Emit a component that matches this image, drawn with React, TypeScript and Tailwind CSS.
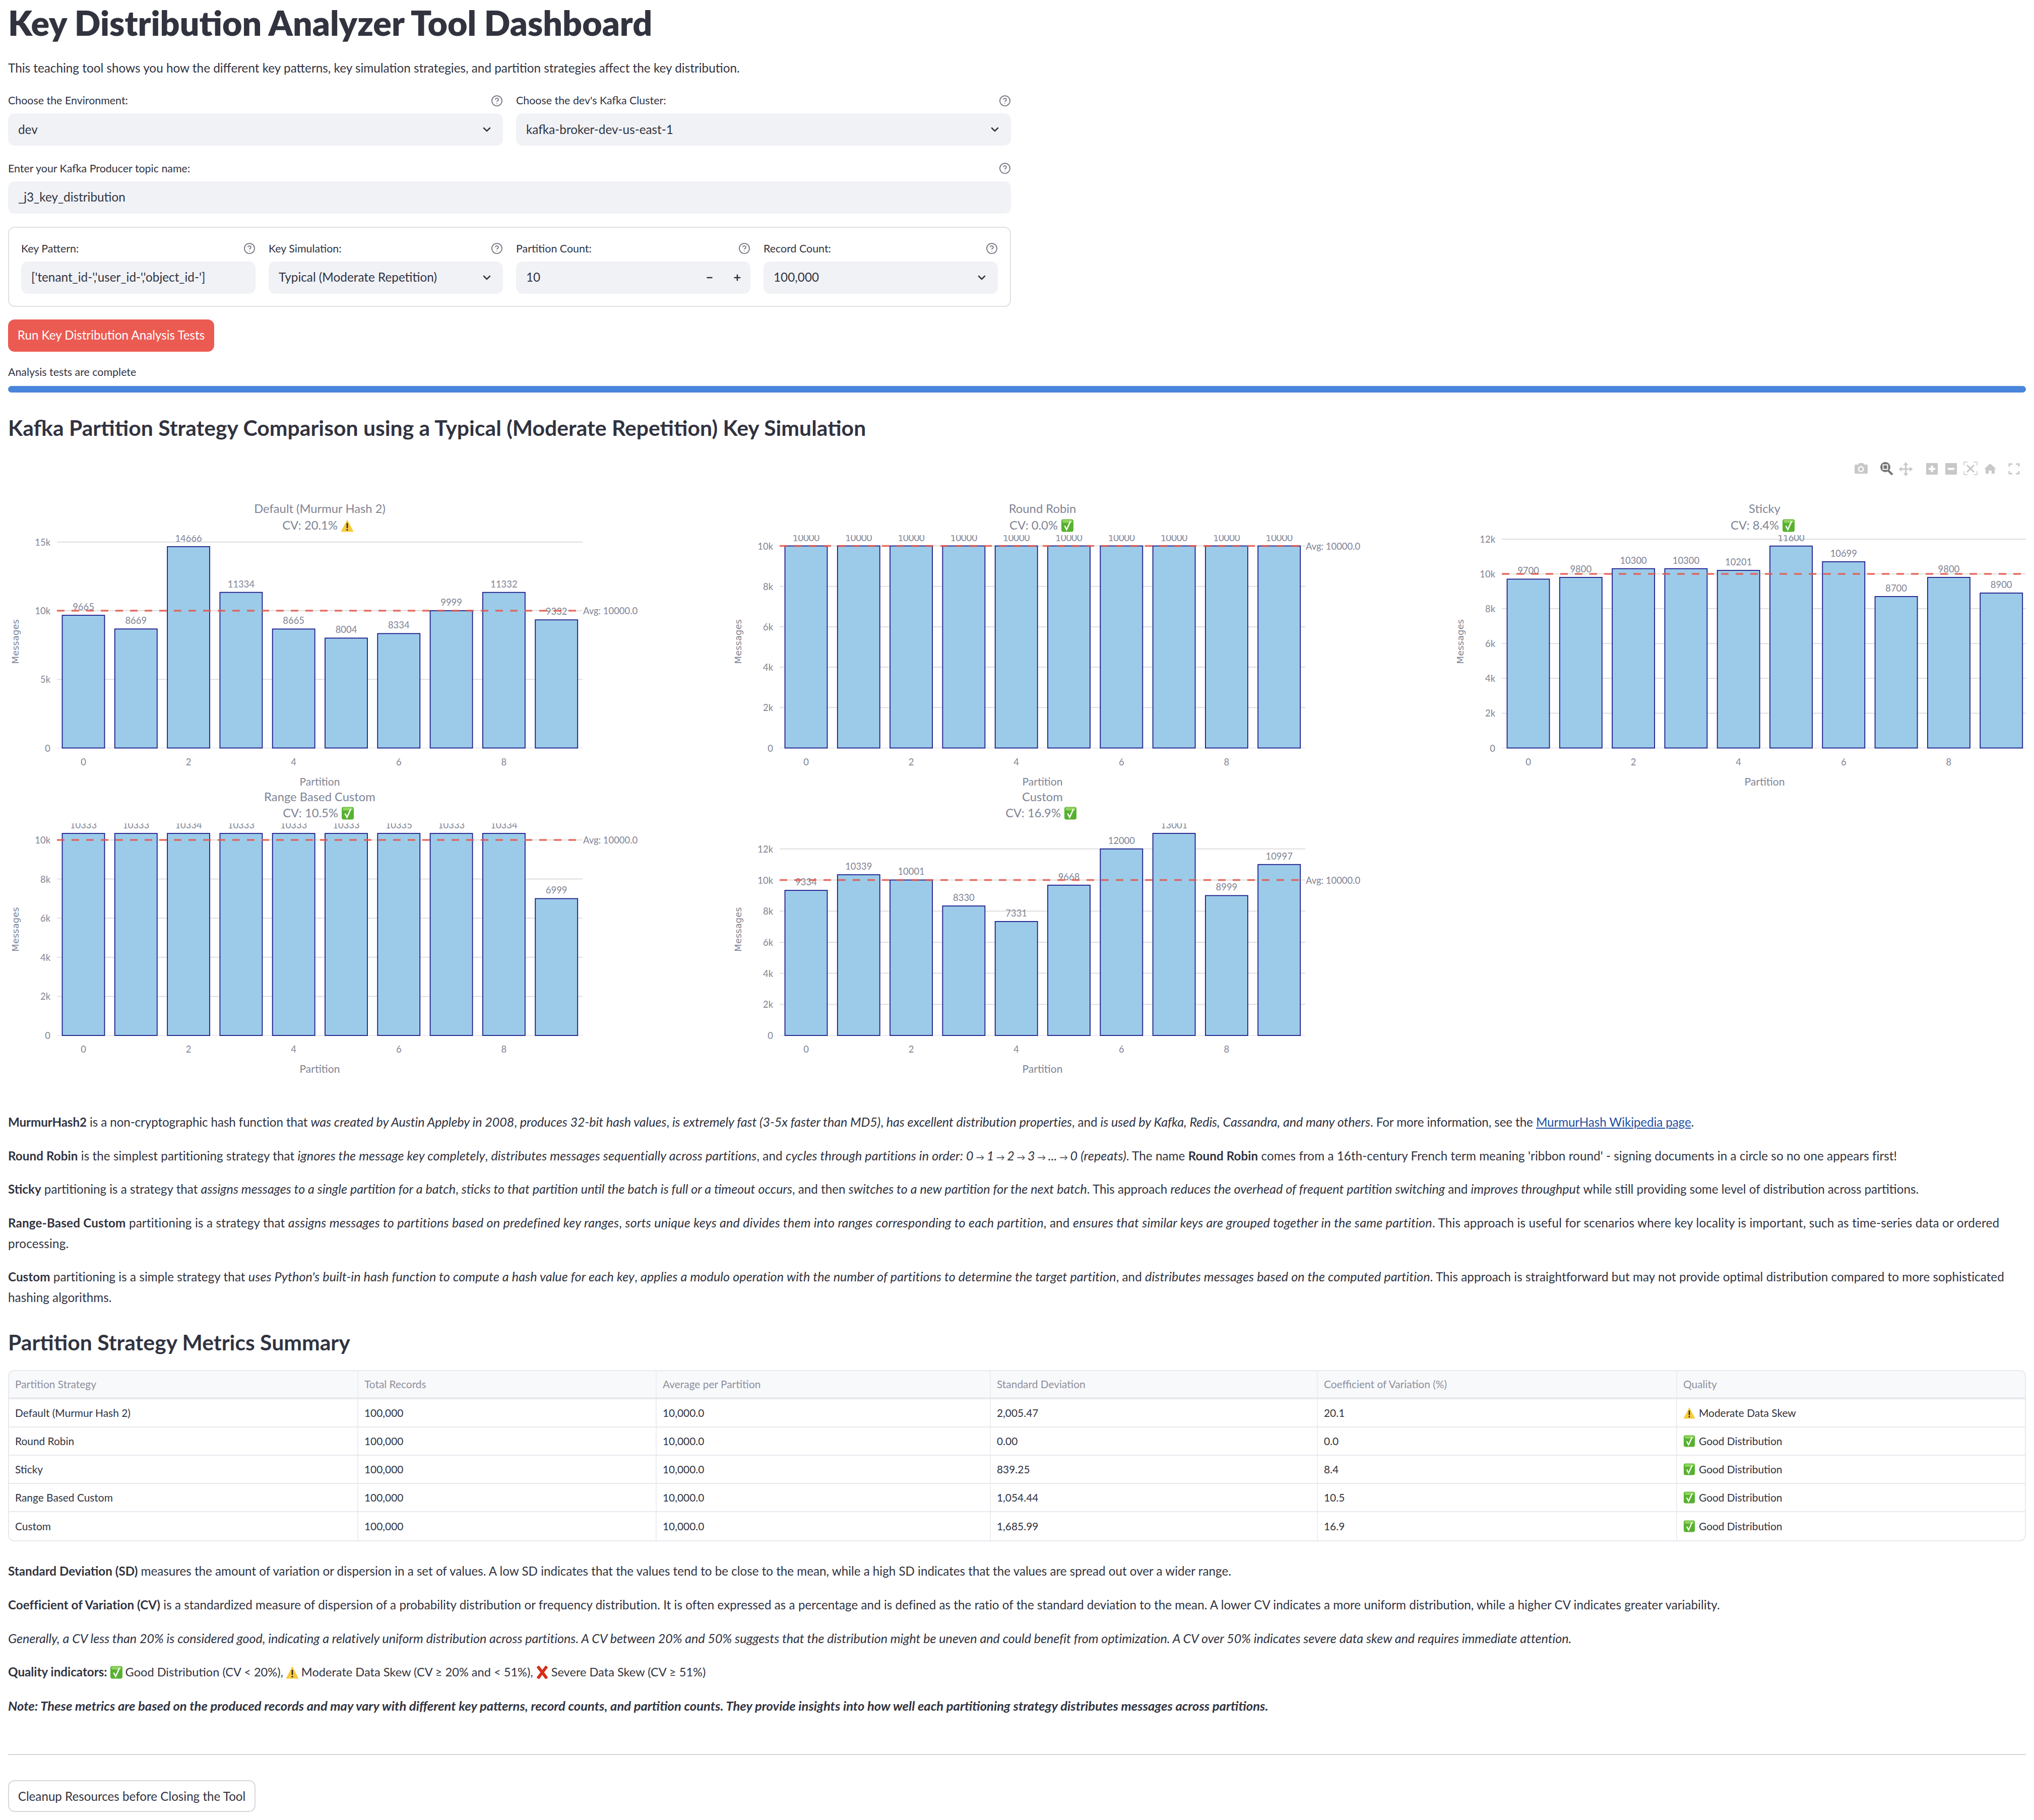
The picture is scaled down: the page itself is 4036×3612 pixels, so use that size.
import { ChevronDown, CircleHelp, Minus, Plus } from 'lucide-react';
import type { ReactNode } from 'react';

const TEXT = '#808495';

type Emoji = 'check' | 'warn';

type Chart = {
  title: string;
  cv: string;
  cvEnd: number;
  emoji: Emoji;
  left: number;
  zero: number;
  per10k: number;
  clipTop: number;
  ticks: [number, string][];
  values: number[];
};

const ROW_1 = { zero: 1483.5, clipTop: 1061 };
const ROW_2 = { zero: 2054, clipTop: 1633 };
const thousands: [number, string][] = [
  [0, '0'],
  [2000, '2k'],
  [4000, '4k'],
  [6000, '6k'],
  [8000, '8k'],
  [10000, '10k'],
];

const charts: Chart[] = [
  {
    title: 'Default (Murmur Hash 2)',
    cv: 'CV: 20.1%',
    cvEnd: 670,
    emoji: 'warn',
    left: 113,
    per10k: 272.5,
    ...ROW_1,
    ticks: [
      [0, '0'],
      [5000, '5k'],
      [10000, '10k'],
      [15000, '15k'],
    ],
    values: [9665, 8669, 14666, 11334, 8665, 8004, 8334, 9999, 11332, 9332],
  },
  {
    title: 'Round Robin',
    cv: 'CV: 0.0%',
    cvEnd: 2099,
    emoji: 'check',
    left: 1547,
    per10k: 401,
    ...ROW_1,
    ticks: thousands,
    values: [10000, 10000, 10000, 10000, 10000, 10000, 10000, 10000, 10000, 10000],
  },
  {
    title: 'Sticky',
    cv: 'CV: 8.4%',
    cvEnd: 3530,
    emoji: 'check',
    left: 2980,
    per10k: 345.5,
    ...ROW_1,
    ticks: [...thousands, [12000, '12k']],
    values: [9700, 9800, 10300, 10300, 10201, 11600, 10699, 8700, 9800, 8900],
  },
  {
    title: 'Range Based Custom',
    cv: 'CV: 10.5%',
    cvEnd: 671,
    emoji: 'check',
    left: 113,
    per10k: 388,
    ...ROW_2,
    ticks: thousands,
    values: [10333, 10333, 10334, 10333, 10333, 10333, 10335, 10333, 10334, 6999],
  },
  {
    title: 'Custom',
    cv: 'CV: 16.9%',
    cvEnd: 2105,
    emoji: 'check',
    left: 1547,
    per10k: 308.5,
    ...ROW_2,
    ticks: [...thousands, [12000, '12k']],
    values: [9334, 10339, 10001, 8330, 7331, 9668, 12000, 13001, 8999, 10997],
  },
];

const tableRows = [
  ['Default (Murmur Hash 2)', '100,000', '10,000.0', '2,005.47', '20.1', 'warn', 'Moderate Data Skew'],
  ['Round Robin', '100,000', '10,000.0', '0.00', '0.0', 'check', 'Good Distribution'],
  ['Sticky', '100,000', '10,000.0', '839.25', '8.4', 'check', 'Good Distribution'],
  ['Range Based Custom', '100,000', '10,000.0', '1,054.44', '10.5', 'check', 'Good Distribution'],
  ['Custom', '100,000', '10,000.0', '1,685.99', '16.9', 'check', 'Good Distribution'],
];

function CheckShape() {
  return (
    <>
      <rect x="1" y="0.5" width="24" height="25" rx="4" fill="#58b130" />
      <rect x="3" y="1.5" width="20" height="6" rx="3" fill="#8fd45e" />
      <path d="M7.5 13.5 L11.5 21 L19 4.5" fill="none" stroke="#fff" strokeWidth="2.6" />
    </>
  );
}

function WarnShape() {
  return (
    <>
      <path d="M13 1 L25 24 Q25.5 25.5 24 25.5 H2 Q0.5 25.5 1 24 Z" fill="#f7cb3f" />
      <path d="M13 8 V18" stroke="#222" strokeWidth="2.6" />
      <circle cx="13" cy="21.5" r="1.6" fill="#222" />
    </>
  );
}

function CrossShape() {
  return <path d="M4 1 L22 25 M22 1 L4 25" fill="none" stroke="#d42f1c" strokeWidth="6" />;
}

function InlineEmoji({ kind, className }: { kind: Emoji | 'cross'; className: string }) {
  return (
    <svg viewBox="0 0 26 26" className={`inline-block ${className}`}>
      {kind === 'check' && <CheckShape />}
      {kind === 'warn' && <WarnShape />}
      {kind === 'cross' && <CrossShape />}
    </svg>
  );
}

function ChartPlot({ chart }: { chart: Chart }) {
  const { left, zero, per10k, clipTop } = chart;
  const right = left + 1043;
  const y = (v: number) => zero - (v / 10000) * per10k;
  const cx = (i: number) => left + 52.5 + i * 104.3;
  const mid = left + 521.5;
  const titleY = clipTop === 1061 ? 1009 : 1581;
  const cvY = clipTop === 1061 ? 1042 : 1613;
  const clipId = `clip-${left}-${clipTop}`;
  return (
    <g fontSize="18.4" fill={TEXT}>
      <clipPath id={clipId}>
        <rect x={left} y={clipTop} width="1043" height={zero - clipTop + 4} />
      </clipPath>
      <text x={mid} y={titleY + 8} textAnchor="middle" fontSize="23.8">
        {chart.title}
      </text>
      <text x={chart.cvEnd} y={cvY + 8} textAnchor="end" fontSize="23.8">
        {chart.cv}
      </text>
      <svg x={chart.cvEnd + 6} y={cvY - 13} width="26" height="26" viewBox="0 0 26 26">
        {chart.emoji === 'warn' ? <WarnShape /> : <CheckShape />}
      </svg>
      {chart.ticks.map(([v, label]) => (
        <g key={label}>
          <line x1={left} x2={right} y1={y(v)} y2={y(v)} stroke={v === 0 ? '#ebedf3' : '#dedede'} strokeWidth="2" />
          <text x={left - 13} y={y(v) + 7} textAnchor="end">
            {label}
          </text>
        </g>
      ))}
      {chart.values.map((v, i) => (
        <rect
          key={i}
          x={cx(i) - 42}
          y={y(v)}
          width="84"
          height={zero - y(v)}
          fill="#9ccbe9"
          stroke="#1a1a8a"
          strokeWidth="1.8"
        />
      ))}
      <g clipPath={`url(#${clipId})`}>
        {chart.values.map((v, i) => (
          <text key={i} x={cx(i)} y={y(v) - 10} textAnchor="middle">
            {v}
          </text>
        ))}
      </g>
      <line
        x1={left}
        x2={right}
        y1={y(10000)}
        y2={y(10000)}
        stroke="#e6574a"
        strokeOpacity="0.85"
        strokeWidth="3.6"
        strokeDasharray="15 14"
      />
      {/* the third plot's label runs off the page in the original, so it isn't drawn */}
      {right + 100 < 4020 && (
        <text x={right + 1} y={y(10000) + 7}>
          Avg: 10000.0
        </text>
      )}
      {[0, 2, 4, 6, 8].map((i) => (
        <text key={i} x={cx(i)} y={zero + 34} textAnchor="middle">
          {i}
        </text>
      ))}
      <text x={mid} y={zero + 74} textAnchor="middle" fontSize="21">
        Partition
      </text>
      <text
        transform={`translate(${left - 76} ${(clipTop + zero) / 2}) rotate(-90)`}
        textAnchor="middle"
        fontSize="18"
        fontFamily="'DejaVu Sans', sans-serif"
      >
        Messages
      </text>
    </g>
  );
}

// plotly mode bar, drawn with the page's coordinates
function ModeBar() {
  return (
    <g fill="#c8c8c8">
      <path d="M3680 923 q0 -2 2 -2 h5 l2 -3 h8 l2 3 h5 q2 0 2 2 v14 q0 2 -2 2 h-22 q-2 0 -2 -2 Z" />
      <circle cx="3692.5" cy="930" r="6" fill="#fff" />
      <circle cx="3692.5" cy="930" r="3.5" />
      <circle cx="3741" cy="926" r="10" fill="#737373" />
      <rect x="3735.5" y="920.5" width="11" height="11" fill="#fff" />
      <rect x="3737.5" y="922.5" width="7" height="7" fill="#737373" />
      <path d="M3747 933 L3755 941" stroke="#737373" strokeWidth="4" fill="none" />
      <path
        d="M3781.5 916 l5 6 h-3.5 v6.5 h6.5 v-3.5 l6 5 -6 5 v-3.5 h-6.5 v6.5 h3.5 l-5 6 -5 -6 h3.5 v-6.5 h-6.5 v3.5 l-6 -5 6 -5 v3.5 h6.5 v-6.5 h-3.5 Z"
      />
      <rect x="3822" y="918" width="23" height="23" />
      <path d="M3833.5 923 V936 M3827 929.5 H3840" stroke="#fff" strokeWidth="4" />
      <rect x="3860" y="918" width="23" height="23" />
      <path d="M3865 929.5 H3878" stroke="#fff" strokeWidth="4" />
      <path
        d="M3897 923 V916 H3904 M3916 916 H3923 V923 M3923 934 V941 H3916 M3904 941 H3897 V934"
        stroke="#c8c8c8"
        strokeWidth="1.5"
        fill="none"
      />
      <path d="M3903 922 L3917 936 M3917 922 L3903 936" stroke="#c8c8c8" strokeWidth="3" fill="none" />
      <path d="M3949 919 L3961 930 H3958 V939 H3952 V933 H3946 V939 H3940 V930 H3937 Z" />
      <path
        d="M3987 925 V920 H3993 M4000 920 H4006 V925 M4006 934 V939 H4000 M3993 939 H3987 V934"
        stroke="#c8c8c8"
        strokeWidth="3"
        fill="none"
      />
    </g>
  );
}

function FieldLabel({ children }: { children: ReactNode }) {
  return (
    <div className="mb-2 flex h-[35px] items-center justify-between text-[21.4px] text-[#31333f]">
      <span>{children}</span>
      <CircleHelp size={24} strokeWidth={1.75} className="text-[#6f717d]" />
    </div>
  );
}

function Box({ children }: { children: ReactNode }) {
  return (
    <div className="flex h-16 items-center justify-between rounded-[13px] bg-[#f0f2f6] pr-5 pl-5 text-[24.3px] text-[#31333f]">
      {children}
    </div>
  );
}

function Select({ value }: { value: string }) {
  return (
    <Box>
      <span>{value}</span>
      <ChevronDown size={24} strokeWidth={2.5} className="text-[#31333f]" />
    </Box>
  );
}

// Lato's widths differ a little from the original face, so some lines carry a small tracking
function Para({ className = '', children }: { className?: string; children: ReactNode }) {
  return (
    <p
      className={`mb-[25.6px] text-[24.2px] leading-[41px] whitespace-nowrap [&_i]:text-[25.2px] [&_i]:leading-none ${className}`}
    >
      {children}
    </p>
  );
}

function Arrow() {
  return <span className="text-[17px] leading-none not-italic"> → </span>;
}

function Heading({ className, children }: { className: string; children: ReactNode }) {
  return <h3 className={`h-[60px] text-[42.7px] leading-[60px] font-bold ${className}`}>{children}</h3>;
}

export default function App() {
  return (
    <div className="w-[4036px] bg-white px-4 pb-[15px] font-[Lato,sans-serif] text-[#31333f]">
      <h1 className="flex h-[90px] items-center text-[68px] font-extrabold">Key Distribution Analyzer Tool Dashboard</h1>
      <p className="mt-6 text-[24.3px] leading-[41px]">
        This teaching tool shows you how the different key patterns, key simulation strategies, and partition strategies
        affect the key distribution.
      </p>

      <div className="w-[1990px]">
        <div className="mt-[27px] grid grid-cols-2 gap-[26px]">
          <div>
            <FieldLabel>Choose the Environment:</FieldLabel>
            <Select value="dev" />
          </div>
          <div>
            <FieldLabel>Choose the dev's Kafka Cluster:</FieldLabel>
            <Select value="kafka-broker-dev-us-east-1" />
          </div>
        </div>

        <div className="mt-[27.5px]">
          <FieldLabel>Enter your Kafka Producer topic name:</FieldLabel>
          <Box>
            <span>_j3_key_distribution</span>
          </Box>
        </div>

        <div className="mt-[26px] grid h-[159px] grid-cols-4 gap-[26px] rounded-[13px] border-2 border-[#dfe0e3] px-6 pt-6">
          <div>
            <FieldLabel>Key Pattern:</FieldLabel>
            <Box>
              <span>['tenant_id-','user_id-','object_id-']</span>
            </Box>
          </div>
          <div>
            <FieldLabel>Key Simulation:</FieldLabel>
            <Select value="Typical (Moderate Repetition)" />
          </div>
          <div>
            <FieldLabel>Partition Count:</FieldLabel>
            <Box>
              <span>10</span>
              <span className="-mr-[3px] flex items-center gap-[38px]">
                <Minus size={16} strokeWidth={3.5} />
                <Plus size={18} strokeWidth={3.5} />
              </span>
            </Box>
          </div>
          <div>
            <FieldLabel>Record Count:</FieldLabel>
            <Select value="100,000" />
          </div>
        </div>
      </div>

      <button className="mt-[25px] h-16 w-[409px] rounded-[13px] bg-[#ec5b52] text-[24.2px] text-white">
        Run Key Distribution Analysis Tests
      </button>
      <div className="mt-[23.5px] h-[35px] text-[21.4px] leading-[35px]">Analysis tests are complete</div>
      <div className="mt-[9.5px] h-[13px] rounded-full bg-[#4a85dc]" />

      <Heading className="mt-10">Kafka Partition Strategy Comparison using a Typical (Moderate Repetition) Key Simulation</Heading>

      <svg viewBox="16 880 4004 1300" className="mt-0.5 block h-[1300px] w-[4004px]">
        {charts.map((chart) => (
          <ChartPlot key={chart.title} chart={chart} />
        ))}
        <ModeBar />
      </svg>

      <div className="mt-[25.5px]">
        <Para className="tracking-[-0.09px]">
          <b>MurmurHash2</b> is a non-cryptographic hash function that <i>was created by Austin Appleby in 2008</i>,{' '}
          <i>produces 32-bit hash values</i>, <i>is extremely fast (3-5x faster than MD5)</i>,{' '}
          <i>has excellent distribution properties</i>, and <i>is used by Kafka, Redis, Cassandra, and many others</i>.
          For more information, see the{' '}
          <a className="text-[#1f4ea1] underline" href="#murmur">
            MurmurHash Wikipedia page
          </a>
          .
        </Para>
        <Para className="tracking-[0.08px]">
          <b>Round Robin</b> is the simplest partitioning strategy that <i>ignores the message key completely</i>,{' '}
          <i>distributes messages sequentially across partitions</i>, and{' '}
          <i>
            cycles through partitions in order: 0<Arrow />1<Arrow />2<Arrow />3<Arrow />...<Arrow />0 (repeats)
          </i>
          . The name <b>Round Robin</b> comes from a 16th-century French term meaning 'ribbon round' - signing documents
          in a circle so no one appears first!
        </Para>
        <Para>
          <b>Sticky</b> partitioning is a strategy that <i>assigns messages to a single partition for a batch</i>,{' '}
          <i>sticks to that partition until the batch is full or a timeout occurs</i>, and then{' '}
          <i>switches to a new partition for the next batch</i>. This approach{' '}
          <i>reduces the overhead of frequent partition switching</i> and <i>improves throughput</i> while still providing
          some level of distribution across partitions.
        </Para>
        <Para className="tracking-[0.19px]">
          <b>Range-Based Custom</b> partitioning is a strategy that{' '}
          <i>assigns messages to partitions based on predefined key ranges</i>,{' '}
          <i>sorts unique keys and divides them into ranges corresponding to each partition</i>, and{' '}
          <i>ensures that similar keys are grouped together in the same partition</i>. This approach is useful for
          scenarios where key locality is important, such as time-series data or ordered
          <br />
          processing.
        </Para>
        <Para className="tracking-[0.07px]">
          <b>Custom</b> partitioning is a simple strategy that{' '}
          <i>uses Python's built-in hash function to compute a hash value for each key</i>,{' '}
          <i>applies a modulo operation with the number of partitions to determine the target partition</i>, and{' '}
          <i>distributes messages based on the computed partition</i>. This approach is straightforward but may not
          provide optimal distribution compared to more sophisticated
          <br />
          hashing algorithms.
        </Para>
      </div>

      <Heading className="mt-[38.6px]">Partition Strategy Metrics Summary</Heading>

      <div className="mt-[25px] overflow-hidden rounded-[12px] border-2 border-[#e8e9ee] text-[20.9px]">
        <div className="grid h-[56px] grid-cols-[693px_592px_663px_649px_713px_1fr] border-b-4 border-[#e8e9ee] bg-[#f8f9fb] text-[#8e909d]">
          {['Partition Strategy', 'Total Records', 'Average per Partition', 'Standard Deviation', 'Coefficient of Variation (%)', 'Quality'].map(
            (h) => (
              <div key={h} className="flex items-center border-r-2 border-[#eceef2] pl-3 last:border-r-0">
                {h}
              </div>
            ),
          )}
        </div>
        {tableRows.map((row, r) => (
          <div
            key={row[0]}
            className={`grid h-[56px] grid-cols-[693px_592px_663px_649px_713px_1fr] ${r < tableRows.length - 1 ? 'border-b-2 border-[#e8e9ee]' : ''}`}
          >
            {row.slice(0, 5).map((cell, i) => (
              <div key={i} className="flex items-center border-r-2 border-[#eceef2] pl-3">
                {cell}
              </div>
            ))}
            <div className="flex items-center gap-[7px] pl-3">
              <InlineEmoji kind={row[5] as Emoji} className="h-6 w-6" />
              <span>{row[6]}</span>
            </div>
          </div>
        ))}
      </div>

      <div className="mt-[38.5px]">
        <Para>
          <b>Standard Deviation (SD)</b> measures the amount of variation or dispersion in a set of values. A low SD
          indicates that the values tend to be close to the mean, while a high SD indicates that the values are spread
          out over a wider range.
        </Para>
        <Para className="tracking-[0.05px]">
          <b>Coefficient of Variation (CV)</b> is a standardized measure of dispersion of a probability distribution or
          frequency distribution. It is often expressed as a percentage and is defined as the ratio of the standard
          deviation to the mean. A lower CV indicates a more uniform distribution, while a higher CV indicates greater
          variability.
        </Para>
        <Para className="tracking-[-0.06px]">
          <i>
            Generally, a CV less than 20% is considered good, indicating a relatively uniform distribution across
            partitions. A CV between 20% and 50% suggests that the distribution might be uneven and could benefit from
            optimization. A CV over 50% indicates severe data skew and requires immediate attention.
          </i>
        </Para>
        <Para>
          <b>Quality indicators:</b>
          <InlineEmoji kind="check" className="mx-[5px] h-[26px] w-[26px] align-[-5px]" />
          <span className="text-[23.6px]">Good Distribution (CV &lt; 20%),</span>
          <InlineEmoji kind="warn" className="mx-[5px] h-[26px] w-[26px] align-[-5px]" />
          <span className="text-[23.6px]">Moderate Data Skew (CV ≥ 20% and &lt; 51%),</span>
          <InlineEmoji kind="cross" className="mx-[5px] h-[26px] w-[26px] align-[-5px]" />
          <span className="text-[23.6px]">Severe Data Skew (CV ≥ 51%)</span>
        </Para>
        <p className="text-[25.6px] leading-[41px] font-bold italic">
          Note: These metrics are based on the produced records and may vary with different key patterns, record counts,
          and partition counts. They provide insights into how well each partitioning strategy distributes messages across
          partitions.
        </p>
      </div>

      <hr className="mt-[75.5px] border-t-2 border-[#d5d6da]" />
      <button className="mt-[50px] h-[63px] w-[491px] rounded-[13px] border-2 border-[#d6d7dc] bg-white text-[24.2px]">
        Cleanup Resources before Closing the Tool
      </button>
    </div>
  );
}
